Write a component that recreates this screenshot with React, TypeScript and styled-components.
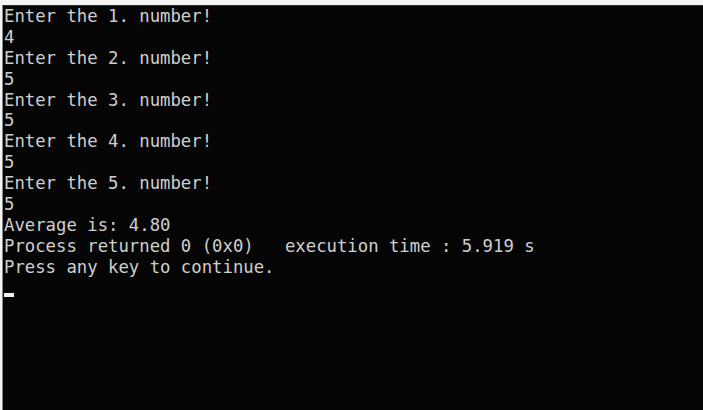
import React from "react";
import styled, { createGlobalStyle } from "styled-components";

const Global = createGlobalStyle`
  html, body { margin: 0; padding: 0; background: #ffffff; }
  #root { width: 703px; height: 410px; overflow: hidden; }
`;

const Window = styled.div`
  box-sizing: border-box;
  width: 703px;
  height: 410px;
  background: #f4f4f4;
  padding: 5px 0 0 2px;
  display: flex;
`;

const Console = styled.div`
  flex: 1;
  box-sizing: border-box;
  background: #050505;
  border-top: 1px solid #2e2e2e;
  border-left: 1px solid #8a8a8a;
  padding: 0 0 0 1px;
  font-family: "DejaVu Sans Mono", "Liberation Mono", monospace;
  font-size: 17.3px;
  line-height: 20.9px;
  color: #cfcfcf;
  display: flex;
  flex-direction: column;
`;

const Line = styled.div`
  white-space: pre;
  height: 20.9px;
`;

const CursorLine = styled.div`
  height: 20.9px;
  display: flex;
  align-items: flex-end;
`;

const Cursor = styled.span`
  display: block;
  width: 10px;
  height: 4px;
  background: #f2f2f2;
  margin-bottom: 1px;
`;

const lines = [
  "Enter the 1. number!",
  "4",
  "Enter the 2. number!",
  "5",
  "Enter the 3. number!",
  "5",
  "Enter the 4. number!",
  "5",
  "Enter the 5. number!",
  "5",
  "Average is: 4.80",
  "Process returned 0 (0x0)   execution time : 5.919 s",
  "Press any key to continue.",
];

export default function App() {
  return (
    <>
      <Global />
      <Window>
        <Console>
          {lines.map((l, i) => (
            <Line key={i}>{l}</Line>
          ))}
          <CursorLine>
            <Cursor />
          </CursorLine>
        </Console>
      </Window>
    </>
  );
}
